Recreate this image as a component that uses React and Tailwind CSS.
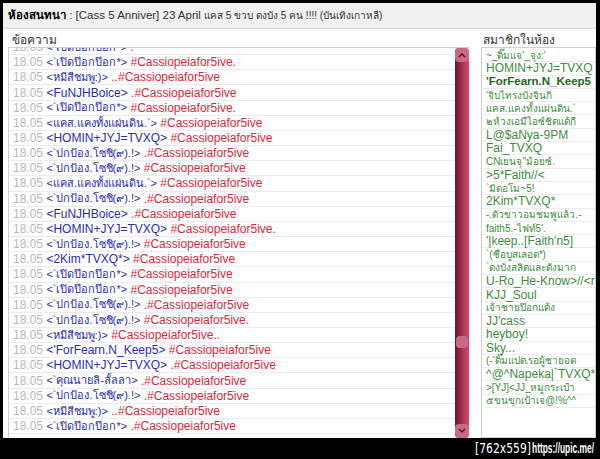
const messages = [
  ["<`เปิดป๊อกป๊อก*>", " ."],
  ["<`เปิดป๊อกป๊อก*>", " #Cassiopeiafor5ive."],
  ["<หมีสีชมพู:)>", " ..#Cassiopeiafor5ive"],
  ["<FuNJHBoice>", " .#Cassiopeiafor5ive"],
  ["<`เปิดป๊อกป๊อก*>", " #Cassiopeiafor5ive."],
  ["<แคส.แคงทั้งแผ่นดิน.`>", " #Cassiopeiafor5ive"],
  ["<HOMIN+JYJ=TVXQ>", " #Cassiopeiafor5ive"],
  ["<`ปกป้อง.โซชิ(๙).!>", " .#Cassiopeiafor5ive"],
  ["<`ปกป้อง.โซชิ(๙).!>", " #Cassiopeiafor5ive"],
  ["<แคส.แคงทั้งแผ่นดิน.`>", " #Cassiopeiafor5ive"],
  ["<`ปกป้อง.โซชิ(๙).!>", " .#Cassiopeiafor5ive"],
  ["<FuNJHBoice>", " .#Cassiopeiafor5ive"],
  ["<HOMIN+JYJ=TVXQ>", " #Cassiopeiafor5ive."],
  ["<`ปกป้อง.โซชิ(๙).!>", " #Cassiopeiafor5ive"],
  ["<2Kim*TVXQ*>", " #Cassiopeiafor5ive"],
  ["<`เปิดป๊อกป๊อก*>", " #Cassiopeiafor5ive"],
  ["<`เปิดป๊อกป๊อก*>", " #Cassiopeiafor5ive"],
  ["<`ปกป้อง.โซชิ(๙).!>", " .#Cassiopeiafor5ive"],
  ["<`ปกป้อง.โซชิ(๙).!>", " #Cassiopeiafor5ive."],
  ["<หมีสีชมพู:)>", " #Cassiopeiafor5ive.."],
  ["<'ForFearn.N_Keep5>", " #Cassiopeiafor5ive"],
  ["<HOMIN+JYJ=TVXQ>", " .#Cassiopeiafor5ive"],
  ["<`คุณนายลิ-ลั้ลลา>", " .#Cassiopeiafor5ive"],
  ["<`ปกป้อง.โซชิ(๙).!>", " .#Cassiopeiafor5ive"],
  ["<หมีสีชมพู:)>", " ..#Cassiopeiafor5ive"],
  ["<`เปิดป๊อกป๊อก*>", " .#Cassiopeiafor5ive"],
]

const members = [
  "~_ดิ๊มแจ'_จุง:'",
  "HOMIN+JYJ=TVXQ",
  "'ForFearn.N_Keep5",
  "'จิบไทรงบังจินกิ",
  "แคส.แคงทั้งแผ่นดิน.`",
  "๒ห้วงเอมีไอซ์ชิตแต้กี",
  "L@$aNya-9PM",
  "Fai_TVXQ",
  "CNเยนจุ''ม้อยซ์.",
  ">5*Faith//<",
  "`มิดอโม~5!",
  "2Kim*TVXQ*",
  "-.ตัวขาวอมชมพูแล้ว.-",
  "faith5.-ไฟท์5'.",
  "'|keep..[Faith'n5]",
  "`(ซือบูสเลอต*)",
  "`ดงบังสลิดและดังมาก",
  "U-Ro_He-Know>//<real",
  "KJJ_Soul",
  "เจ้าชายป๊อกแต้ง",
  "JJ'cass",
  "heyboy!",
  "Sky...",
  "(-'ดิ๊มแปด.รอผู้ชายอต",
  "^@^Napeka|`TVXQ*",
  ">[YJ]<JJ_หมูกระเป๋า",
  "๕ขนขุกเป้าเจ@!%^^",
]

const isThai = (s) => /[\u0E00-\u0E7F]/.test(s)

function Scrollbar() {
  return (
    <div className="w-[14px] shrink-0 flex flex-col justify-between bg-gradient-to-r from-[#6e1230] via-[#a8304f] to-[#d04a6a] rounded-sm">
      <div className="h-[14px] flex items-center justify-center bg-[#c86a82] rounded-sm">
        <svg width="8" height="6" viewBox="0 0 8 6"><path d="M1 5 L4 2 L7 5" stroke="#5a0f25" strokeWidth="1.5" fill="none" /></svg>
      </div>
      <div className="flex-1 flex flex-col justify-end pb-[76px]">
        <div className="h-[12px] mx-[1px] bg-[#c86a82] rounded-sm" />
      </div>
      <div className="h-[14px] flex items-center justify-center bg-[#c86a82] rounded-sm">
        <svg width="8" height="6" viewBox="0 0 8 6"><path d="M1 1 L4 4 L7 1" stroke="#5a0f25" strokeWidth="1.5" fill="none" /></svg>
      </div>
    </div>
  )
}

function memberClass(m, i) {
  if (i === 2) return "font-bold text-[#226622] text-[11.5px]"
  return isThai(m) ? "text-[#3c8c3c] text-[10px]" : "text-[#3c8c3c] text-[12px]"
}

export default function App() {
  return (
    <div className="w-[600px] h-[459px] bg-black pt-[3px] pl-[3px] pr-[4px] flex flex-col overflow-hidden" style={{ fontFamily: '"Liberation Sans", Arial, sans-serif' }}>
      <div className="flex-1 bg-white flex flex-col overflow-hidden min-h-0">
        <div className="h-[26px] shrink-0 bg-[#f0f0f0] border-b border-[#d8d8d8] flex items-center pl-[5px] text-[11.5px] text-[#333] whitespace-pre">
          <span className="font-bold text-black">ห้องสนทนา</span>
          <span> : [Cass 5 Anniver] 23 April </span>
          <span className="text-[10px]">แคส 5 ขวบ ดงบัง 5 คน !!!! (บันเทิงเกาหลี)</span>
        </div>
        <div className="flex-1 flex pl-[5px] pt-[5px] min-h-0">
          <div className="w-[461px] shrink-0 flex flex-col">
            <div className="h-[13px] pl-[4px] text-[12px] leading-[13px] text-[#333]">ข้อความ</div>
            <div className="flex-1 flex border-t border-l border-[#cfcfcf] min-h-0">
              <div className="flex-1 overflow-hidden">
                <div className="-mt-[8px]">
                  {messages.map(([name, tag], i) => (
                    <div key={i} className="h-[15.17px] border-b border-[#ececec] pl-[4px] flex items-center text-[12px] whitespace-pre">
                      <span className="text-[#b8b8b8]">18.05 </span>
                      <span className={`text-[#2b2bb0] ${isThai(name) ? "text-[11px]" : "text-[12px]"}`}>{name}</span>
                      <span className="text-[#d8283c]">{tag}</span>
                    </div>
                  ))}
                </div>
              </div>
              <Scrollbar />
            </div>
          </div>
          <div className="ml-[12px] flex-1 min-w-0 flex flex-col">
            <div className="h-[13px] pl-[2px] text-[12px] leading-[13px] text-[#333]">สมาชิกในห้อง</div>
            <div className="flex-1 border border-[#cfcfcf] overflow-hidden pt-[1px]">
              {members.map((m, i) => (
                <div key={i} className={`h-[13.3px] border-b border-[#ececec] pl-[4px] flex items-center whitespace-nowrap ${memberClass(m, i)}`}>
                  {m}
                </div>
              ))}
            </div>
          </div>
        </div>
      </div>
      <div className="h-[21px] shrink-0 flex items-center justify-end text-white pr-[1px]">
        <div className="w-[55px] whitespace-nowrap">
          <div className="origin-left scale-x-[0.77] text-[14px]" style={{ fontFamily: '"DejaVu Sans", sans-serif' }}>[762x559]</div>
        </div>
        <div className="w-[63px] ml-[2px] whitespace-nowrap">
          <div className="origin-left scale-x-[0.6] text-[14px] font-bold">https://upic.me/</div>
        </div>
      </div>
    </div>
  )
}
